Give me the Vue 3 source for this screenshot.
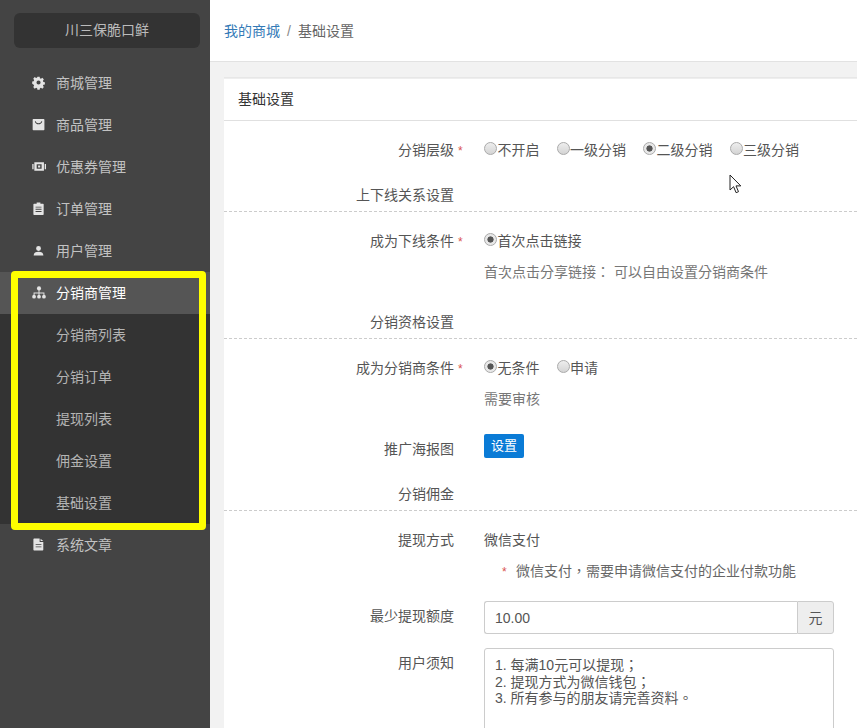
<script setup>
const menus = [
  { name: '商城管理', icon: 'gear' },
  { name: '商品管理', icon: 'bag' },
  { name: '优惠券管理', icon: 'ticket' },
  { name: '订单管理', icon: 'clip' },
  { name: '用户管理', icon: 'user' },
]
const subs = ['分销商列表', '分销订单', '提现列表', '佣金设置', '基础设置']
const notice = '1. 每满10元可以提现；\n2. 提现方式为微信钱包；\n3. 所有参与的朋友请完善资料。'
</script>

<template>
  <div class="page">
    <aside class="side">
      <div class="brand">川三保脆口鲜</div>
      <nav class="nav">
        <div v-for="m in menus" :key="m.name" class="item">
          <svg class="ico" viewBox="0 0 15 15">
            <template v-if="m.icon === 'gear'">
              <path fill-rule="evenodd" d="M5.800 0.800h2.400l.3 1.700 1.100.5 1.500-1 1.600 1.700-1 1.400.5 1.200 1.600.3v2.400l-1.600.3-.5 1.200 1 1.400-1.600 1.700-1.500-1-1.100.5-.3 1.700H5.800l-.3-1.700-1.100-.5-1.500 1-1.600-1.700 1-1.400-.5-1.200L.2 8.200V5.800l1.600-.3.5-1.200-1-1.400 1.600-1.700 1.500 1 1.100-.5zM7 4.800a2.200 2.200 0 1 0 0 4.400 2.200 2.200 0 0 0 0-4.400z"/>
            </template>
            <template v-else-if="m.icon === 'bag'">
              <path fill-rule="evenodd" d="M1.500 1h11a.8.8 0 0 1 .8.8v10.400a.8.800 0 0 1-.8.8h-11a.8.800 0 0 1-.8-.8V1.800a.8.800 0 0 1 .8-.8zM3.800 3.200l-.8.6c.6 2 2 3 4 3s3.400-1 4-3l-.8-.6c-.5 1.500-1.600 2.400-3.200 2.400s-2.700-.9-3.200-2.400z"/>
            </template>
            <template v-else-if="m.icon === 'ticket'">
              <path fill-rule="evenodd" d="M2.500 2.500h10.300v9H2.500zM5 4.600v4.800h5.300V4.600zM6.500 5.900h2.300v2.200H6.500zM0.300 4.200h1.400v5.600H.3zM13.600 4.200h1.400v5.600h-1.400z"/>
            </template>
            <template v-else-if="m.icon === 'clip'">
              <path fill-rule="evenodd" d="M5 .5h4v1.300h2.800a.7.7 0 0 1 .7.7v10.600a.7.700 0 0 1-.7.7H2.200a.7.700 0 0 1-.7-.7V2.500a.7.700 0 0 1 .7-.7H5zM3.800 5v1h6.400V5zM3.800 7.300v1h6.400v-1zM3.800 9.600v1h6.400v-1z"/>
            </template>
            <template v-else>
              <path d="M7 2.200a2.600 2.600 0 1 1 0 5.200 2.600 2.600 0 0 1 0-5.200zM1.800 12.200c0-2.600 2.200-3.800 5.200-3.800s5.200 1.200 5.200 3.800z"/>
            </template>
          </svg>
          <span>{{ m.name }}</span>
        </div>
        <div class="item active">
          <svg class="ico" viewBox="0 0 15 15">
            <circle cx="7.500" cy="2.600" r="2.200"/>
            <circle cx="2.200" cy="11.500" r="2"/>
            <circle cx="7.500" cy="11.500" r="2"/>
            <circle cx="12.800" cy="11.500" r="2"/>
            <path d="M7 4h1v3h5.300v3.500h-1V8H8v2.500H7V8H2.700v2.500h-1V7H7z"/>
          </svg>
          <span>分销商管理</span>
        </div>
        <div class="subs">
          <div v-for="s in subs" :key="s" class="sub">{{ s }}</div>
        </div>
        <div class="item">
          <svg class="ico" viewBox="0 0 15 15">
            <path fill-rule="evenodd" d="M2.300.6h5.900v3.600h3.900v8.400a.8.800 0 0 1-.8.800H2.300a.8.800 0 0 1-.8-.8V1.400a.8.800 0 0 1 .8-.8zM9.200.8l2.800 2.500H9.200zM3.900 6.600v1h6.200v-1zM3.900 9v1h6.200V9z"/>
          </svg>
          <span>系统文章</span>
        </div>
      </nav>
    </aside>

    <main class="main">
      <header class="crumbs">
        <a class="link">我的商城</a>
        <span class="slash">/</span>
        <span>基础设置</span>
      </header>

      <div class="content">
        <section class="panel">
          <h2 class="title">基础设置</h2>
          <div class="body">
            <div class="row gap25">
              <label class="lab">分销层级</label><i class="req">*</i>
              <div class="ctl radios">
                <label class="opt"><input type="radio" class="radio" name="a" />不开启</label>
                <label class="opt"><input type="radio" class="radio" name="a" />一级分销</label>
                <label class="opt"><input type="radio" class="radio" name="a" checked />二级分销</label>
                <label class="opt"><input type="radio" class="radio" name="a" />三级分销</label>
              </div>
            </div>
            <div class="section">上下线关系设置</div>

            <div class="row gap11">
              <label class="lab">成为下线条件</label><i class="req">*</i>
              <div class="ctl radios">
                <label class="opt"><input type="radio" class="radio" name="b" checked />首次点击链接</label>
              </div>
            </div>
            <div class="row gap30">
              <span class="lab"></span><i class="req"></i>
              <div class="ctl help tc">首次点击分享链接： 可以自由设置分销商条件</div>
            </div>
            <div class="section">分销资格设置</div>

            <div class="row gap11">
              <label class="lab">成为分销商条件</label><i class="req">*</i>
              <div class="ctl radios">
                <label class="opt"><input type="radio" class="radio" name="c" checked />无条件</label>
                <label class="opt"><input type="radio" class="radio" name="c" />申请</label>
              </div>
            </div>
            <div class="row gap25">
              <span class="lab"></span><i class="req"></i>
              <div class="ctl help">需要审核</div>
            </div>
            <div class="row gap25">
              <label class="lab drop5">推广海报图</label><i class="req"></i>
              <div class="ctl"><button class="btn" type="button">设置</button></div>
            </div>
            <div class="section">分销佣金</div>

            <div class="row gap11">
              <label class="lab">提现方式</label><i class="req"></i>
              <div class="ctl">微信支付</div>
            </div>
            <div class="row gap20">
              <span class="lab"></span><i class="req"></i>
              <div class="ctl note tc"><i class="req inline">*</i><span>微信支付，需要申请微信支付的企业付款功能</span></div>
            </div>
            <div class="row gap14">
              <label class="lab drop5">最少提现额度</label><i class="req"></i>
              <div class="ctl group">
                <input class="input" type="text" value="10.00" />
                <span class="addon">元</span>
              </div>
            </div>
            <div class="row">
              <label class="lab drop5">用户须知</label><i class="req"></i>
              <div class="ctl wide"><textarea class="area tc" :value="notice"></textarea></div>
            </div>
          </div>
        </section>
      </div>
    </main>

    <div class="mark"></div>
    <svg class="cursor" viewBox="0 0 13 20" width="13" height="20">
      <path d="M1 1v15l3.600-3.300 2.500 6 2.400-1-2.500-5.800h4.800z" fill="#fff" stroke="#222" stroke-width="1"/>
    </svg>
  </div>
</template>

<style>
html, body { margin: 0; height: 100%; overflow: hidden; }
</style>

<style scoped>
.page {
  position: relative;
  display: flex;
  width: 857px;
  height: 728px;
  overflow: hidden;
  font: 14px/20px "Liberation Sans", "Noto Sans CJK SC", sans-serif;
  color: #555;
  background: #f2f2f2;
}
.tc { font-family: "Liberation Sans", "Noto Sans CJK TC", sans-serif; }
.side {
  width: 210px;
  flex: none;
  background: #444;
  color: #c2c2c2;
}
.brand {
  margin: 13px 10px 14px 14px;
  height: 35px;
  line-height: 35px;
  border-radius: 6px;
  background: #333;
  text-align: center;
  color: #bbb;
}
.item, .sub {
  display: flex;
  align-items: center;
  height: 42px;
}
.item { padding-left: 32px; }
.sub { padding-left: 56px; }
.ico {
  width: 14px;
  height: 14px;
  margin-right: 10px;
  fill: #e4e4e4;
  flex: none;
  overflow: visible;
}
.active { background: #555; color: #fff; }
.subs { background: #333; color: #b4b4b4; }

.main { flex: 1; min-width: 0; }
.crumbs {
  display: flex;
  align-items: center;
  height: 61px;
  padding-left: 14px;
  background: #fff;
  border-bottom: 1px solid #e2e2e2;
  color: #666;
}
.link { color: #337ab7; }
.slash { margin: 0 7px; color: #888; }
.content { padding: 15px 0 0 14px; }
.panel {
  background: #fff;
  border-top: 1px solid #e7e7e7;
  box-shadow: inset 0 1px 0 #eee;
  height: 700px;
}
.title {
  margin: 0;
  height: 43px;
  padding: 11px 14px 0;
  box-sizing: border-box;
  font-size: 14px;
  font-weight: 400;
  line-height: 20px;
  color: #333;
  border-bottom: 1px solid #e0e0e0;
}
.body { padding-top: 19px; }
.row { display: flex; }
.gap11 { margin-bottom: 11px; }
.gap14 { margin-bottom: 14px; }
.gap20 { margin-bottom: 20px; }
.gap25 { margin-bottom: 25px; }
.gap30 { margin-bottom: 30px; }
.lab {
  width: 230px;
  flex: none;
  text-align: right;
  color: #555;
}
.drop5 { padding-top: 5px; }
.req {
  width: 30px;
  flex: none;
  padding: 2px 0 0 4px;
  box-sizing: border-box;
  font-style: normal;
  line-height: 18px;
  color: #d9534f;
  font-size: 12px;
}
.inline { width: 14px; padding-left: 0; }
.ctl { flex: 1; min-width: 0; }
.radios { display: flex; gap: 17px; }
.opt { display: flex; align-items: center; color: #555; }
.radio {
  appearance: none;
  width: 13px;
  height: 13px;
  margin: -3px 0.500px 0 0;
  border: 1px solid #aaa;
  border-radius: 50%;
  background: linear-gradient(#eee, #d4d4d4);
  box-sizing: border-box;
}
.radio:checked {
  background: radial-gradient(circle, #555 0 2.800px, #e8e8e8 3.400px);
}
.help { color: #777; }
.section {
  width: 230px;
  height: 20px;
  padding-bottom: 7px;
  text-align: right;
  color: #555;
  box-sizing: content-box;
  position: relative;
  margin-bottom: 19px;
}
.section::after {
  content: "";
  position: absolute;
  left: 0;
  bottom: 0;
  width: 633px;
  border-bottom: 1px dashed #ccc;
}
.btn {
  display: block;
  width: 40px;
  height: 24px;
  padding: 0;
  border: 0;
  border-radius: 2px;
  background: #0a7bd6;
  color: #fff;
  font: inherit;
  font-size: 13px;
}
.note { display: flex; padding-left: 18px; color: #666; }
.group { display: flex; max-width: 350px; height: 33px; box-sizing: border-box; }
.input {
  flex: 1;
  min-width: 0;
  box-sizing: border-box;
  padding: 0 10px;
  border: 1px solid #ccc;
  border-right: 0;
  border-radius: 3px 0 0 3px;
  font: inherit;
  color: #555;
  outline: none;
}
.addon {
  width: 37px;
  box-sizing: border-box;
  display: flex;
  align-items: center;
  justify-content: center;
  border: 1px solid #ccc;
  border-radius: 0 3px 3px 0;
  background: #eee;
}
.wide { max-width: 350px; }
.area {
  display: block;
  width: 350px;
  height: 150px;
  box-sizing: border-box;
  padding: 8px 10px;
  border: 1px solid #ccc;
  border-radius: 3px;
  font-size: 14px;
  line-height: 16.700px;
  color: #555;
  resize: none;
  outline: none;
}
.mark {
  position: absolute;
  left: 11px;
  top: 271px;
  width: 195px;
  height: 259px;
  box-sizing: border-box;
  border: 7px solid #ff0;
  border-radius: 4px;
  pointer-events: none;
}
.cursor { position: absolute; left: 729px; top: 174px; }
</style>
